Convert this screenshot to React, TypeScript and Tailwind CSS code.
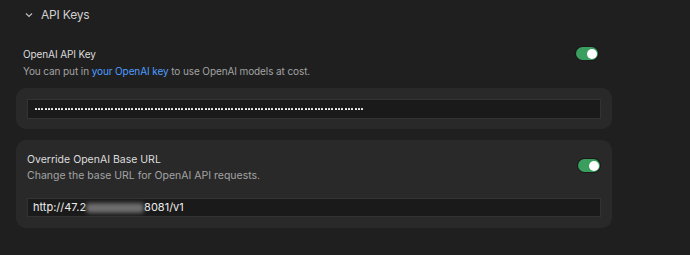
import React from 'react'

function Toggle() {
  return (
    <div className="flex h-[13px] w-[22px] items-center justify-end rounded-full bg-[#3a9e5f] px-[1.5px] shadow-[0_0_0_1px_#1a1a1a]">
      <div className="h-[10px] w-[10px] rounded-full bg-white" />
    </div>
  )
}

const dots = Array.from({ length: 99 })

export default function App() {
  return (
    <div className="h-[255px] w-[690px] bg-[#1f1f1f] font-['Inter',sans-serif] overflow-hidden">
      <div className="flex items-center gap-[8px] pl-[25px] pt-[5px] h-[19px] box-content">
        <svg width="8" height="8" viewBox="0 0 8 8" fill="none" stroke="#bdbdbd" strokeWidth="1.2">
          <path d="M1 2.5 L4 5.5 L7 2.5" />
        </svg>
        <span className="text-[12px] tracking-[-0.2px] text-[#d0d0d0]">API Keys</span>
      </div>

      <div className="w-[596px] ml-[16px] mt-[22px]">
        <div className="flex items-start justify-between pl-[7px] pr-[14px]">
          <div className="text-[10px] tracking-[-0.1px]">
            <div className="text-[#dcdcdc] leading-[16px]">OpenAI API Key</div>
            <div className="text-[#a3a3a3] leading-[16px] mt-[1px]">
              You can put in <span className="text-[#4f9dff]">your OpenAI key</span> to use OpenAI models at cost.
            </div>
          </div>
          <div className="mt-[1px]">
            <Toggle />
          </div>
        </div>

        <div className="mt-[9px] rounded-[10px] bg-[#292929] px-[11px] pt-[11px] pb-[10px]">
          <div className="h-[20px] border border-[#333] bg-[#1a1a1a] flex items-center pl-[7px] overflow-hidden">
            {dots.map((_, i) => (
              <span
                key={i}
                className={
                  i % 3 === 2
                    ? 'block h-[2px] w-[2px] mr-[2px] rounded-[0.6px] bg-[#f2f2f2] shrink-0'
                    : 'block h-[2px] w-[2px] mr-[1px] rounded-[0.6px] bg-[#f2f2f2] shrink-0'
                }
              />
            ))}
          </div>
        </div>

        <div className="mt-[11px] rounded-[10px] bg-[#292929] px-[11px] pt-[12px] pb-[11px]">
          <div className="flex items-start justify-between pr-[1px]">
            <div className="text-[10.5px]">
              <div className="text-[#dcdcdc] leading-[16px]">Override OpenAI Base URL</div>
              <div className="text-[#a3a3a3] leading-[16px]">Change the base URL for OpenAI API requests.</div>
            </div>
            <div className="mt-[7px]">
              <Toggle />
            </div>
          </div>
          <div className="mt-[14px] h-[19px] border border-[#333] bg-[#1a1a1a] flex items-center pl-[5px] text-[11px] text-[#ececec] overflow-hidden whitespace-nowrap">
            <span>http://47.2</span>
            <span className="inline-block h-[10px] w-[58px] bg-[#6e6e6e] rounded-[4px] blur-[2px]" />
            <span>8081/v1</span>
          </div>
        </div>
      </div>
    </div>
  )
}
